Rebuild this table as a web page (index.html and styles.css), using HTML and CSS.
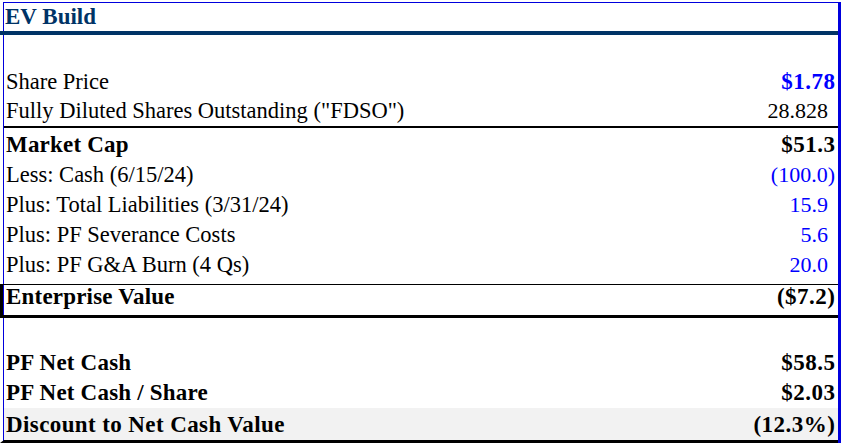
FILE: index.html
```html
<!DOCTYPE html>
<html>
<head>
<meta charset="utf-8">
<link rel="stylesheet" href="styles.css">
</head>
<body>
<div class="sheet">
  <div class="title-row"><span class="title">EV Build</span></div>
  <div class="row blank"></div>
  <div class="row"><span class="label">Share Price</span><span class="val strong blue">$1.78</span></div>
  <div class="row rule-under"><span class="label">Fully Diluted Shares Outstanding ("FDSO")</span><span class="val pad">28.828</span></div>
  <div class="row tall"><span class="label strong">Market Cap</span><span class="val strong">$51.3</span></div>
  <div class="row"><span class="label">Less: Cash (6/15/24)</span><span class="val blue">(100.0)</span></div>
  <div class="row"><span class="label">Plus: Total Liabilities (3/31/24)</span><span class="val blue pad">15.9</span></div>
  <div class="row"><span class="label">Plus: PF Severance Costs</span><span class="val blue pad">5.6</span></div>
  <div class="row last-add"><span class="label">Plus: PF G&amp;A Burn (4 Qs)</span><span class="val blue pad">20.0</span></div>
  <div class="row total"><span class="label strong">Enterprise Value</span><span class="val strong">($7.2)</span></div>
  <div class="row blank"></div>
  <div class="row"><span class="label strong">PF Net Cash</span><span class="val strong">$58.5</span></div>
  <div class="row"><span class="label strong">PF Net Cash / Share</span><span class="val strong">$2.03</span></div>
  <div class="row result"><span class="label strong wide">Discount to Net Cash Value</span><span class="val strong">(12.3%)</span></div>
</div>
</body>
</html>
```
FILE: styles.css
```css
html, body {
  margin: 0;
  padding: 0;
  background: #ffffff;
}

body {
  font-family: "Liberation Serif", "Times New Roman", serif;
  font-size: 22px;
  color: #000000;
}

.sheet {
  margin: 2px 0 0 3px;
  width: 834px;
  border-top: 1px solid #0000dd;
  border-left: 1px solid #0000dd;
  border-right: 3px solid #0000dd;
  display: flex;
  flex-direction: column;
}

.title-row {
  margin-left: -4px;
  padding-left: 5px;
  height: 28px;
  border-bottom: 4px solid #003366;
  display: flex;
  align-items: flex-start;
}

.title {
  font-size: 23px;
  font-weight: bold;
  color: #003366;
  line-height: 27px;
}

.row {
  height: 30px;
  padding: 0 3px 3px 2px;
  box-sizing: border-box;
  display: flex;
  align-items: flex-end;
  justify-content: space-between;
  line-height: 24px;
  white-space: nowrap;
}

.row.blank {
  height: 30px;
  padding: 0;
}

.title-row + .row.blank {
  height: 32px;
}

.rule-under {
  height: 31px;
  border-bottom: 2px solid #000000;
}

.tall {
  height: 32px;
}

.last-add {
  height: 34px;
  padding-bottom: 7px;
}

.total {
  margin-left: -4px;
  padding-left: 3px;
  height: 34px;
  padding-bottom: 6px;
  border-top: 1px solid #000000;
  border-left: 3px solid #000000;
  border-bottom: 3px solid #000000;
}

.result {
  margin-left: -4px;
  padding-left: 2px;
  height: 35px;
  border-left: 4px solid transparent;
  border-bottom: 3px solid #000000;
  background: #f2f2f2;
  background-clip: padding-box;
}

.label {
  font-size: 22.5px;
}

.strong {
  font-weight: bold;
}

.label.strong {
  font-size: 23px;
  letter-spacing: 0.2px;
}

.label.wide {
  letter-spacing: 0.4px;
}

.val.strong {
  font-size: 23px;
  letter-spacing: 0.5px;
  margin-right: -0.5px;
}

.blue {
  color: #0000ff;
}

.pad {
  padding-right: 7px;
}
```
